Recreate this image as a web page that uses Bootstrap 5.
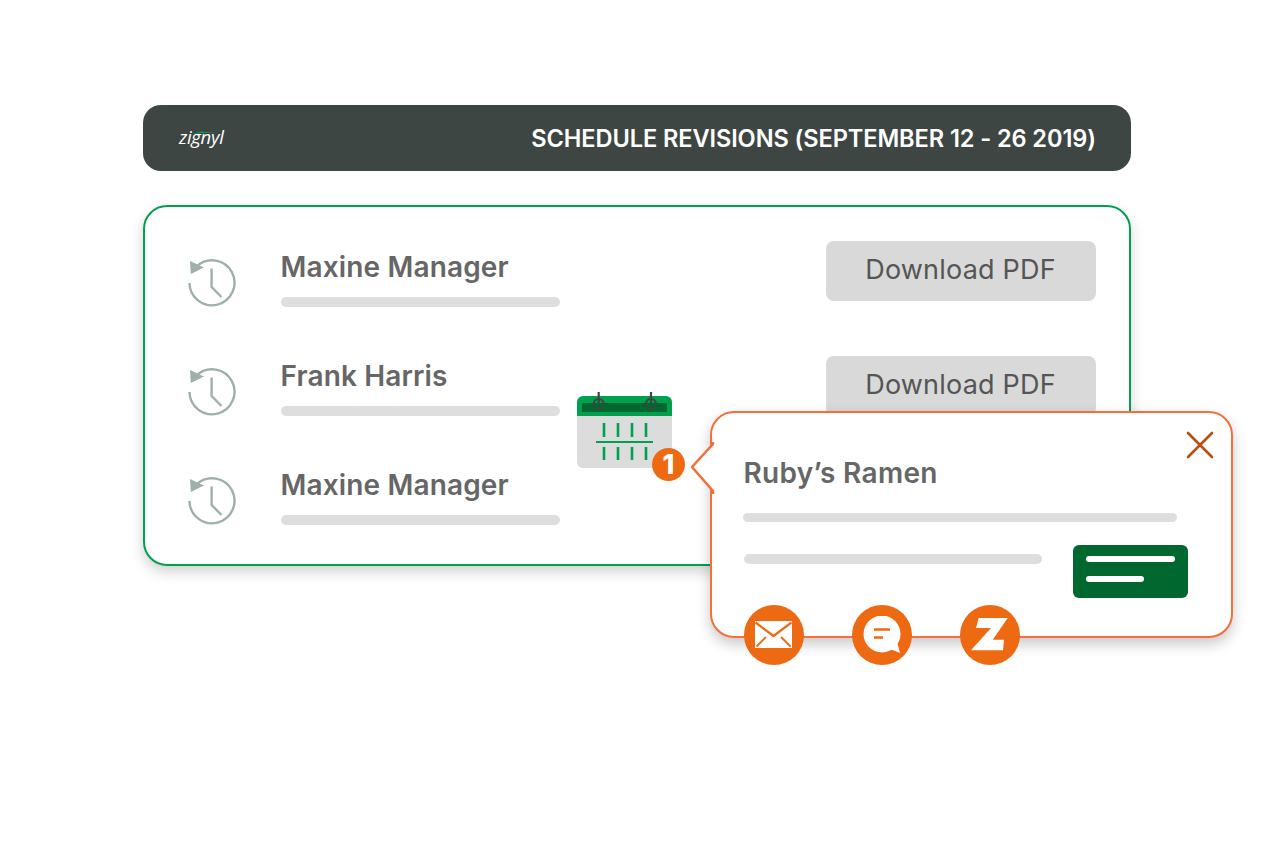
<!DOCTYPE html>
<html lang="en">
<head>
<meta charset="UTF-8">
<meta name="viewport" content="width=device-width, initial-scale=1.0">
<title>Schedule Revisions</title>
<link href="https://cdn.jsdelivr.net/npm/bootstrap@5.3.0/dist/css/bootstrap.min.css" rel="stylesheet">
<style>
body { background: #fff; font-family: Inter, "Liberation Sans", sans-serif; }
.stage { position: relative; width: 1268px; height: 849px; padding: 105px 137px 0 143px; }
.title-bar { height: 66px; background: #3e4643; border-radius: 18px; padding: 0 35px 0 36px; color: #fff; }
.logo-wrap { position: relative; width: 46px; }
.logo-text { font-family: "Open Sans", sans-serif; font-style: italic; font-size: 18.5px; letter-spacing: -.3px; line-height: 1; }
.logo-swoosh { position: absolute; left: 13px; top: 5px; }
.title-text { font-size: 23.6px; font-weight: 600; letter-spacing: -.1px; padding-top: 1px; }
.panel { height: 361px; margin-top: 34px; border: 2.5px solid #00a14e; border-radius: 24px; box-shadow: 0 6px 14px rgba(0,0,0,.18); padding: 33.5px 33.5px 0 42px; background: #fff; }
.rev-row { height: 109.3px; }
.rev-icon { width: 50px; height: 50px; margin-top: 16px; margin-right: 43.5px; }
.rev-name { font-size: 28px; font-weight: 600; color: #666; line-height: 32px; letter-spacing: .15px; margin-top: 10px; white-space: nowrap; }
.line-bar { background: #dedede; border-radius: 6px; height: 10px; }
.rev-bar { width: 279px; margin-top: 14px; }
.pdf-btn { width: 270px; height: 60px; background: #d9d9d9; border: 0; border-radius: 8px; color: #555; font-size: 27px; letter-spacing: .2px; padding: 0 0 1px; margin-bottom: 55px; }
.cal-icon { position: absolute; left: 577px; top: 390px; }
.step-dot { position: absolute; left: 652px; top: 448px; width: 33px; height: 33px; border-radius: 50%; background: #ed6a12; color: #fff; font-size: 27px; font-weight: 800; line-height: 1; }
.popup { position: absolute; left: 710px; top: 411px; width: 523px; height: 227px; background: #fff; border: 2.5px solid #f56f3a; border-radius: 24px; box-shadow: 0 6px 14px rgba(0,0,0,.22); padding: 44px 43px 0 31.5px; }
.popup-arrow { position: absolute; left: -21.5px; top: 28px; }
.popup-close { position: absolute; right: 17px; top: 18px; }
.popup-name { font-size: 28px; font-weight: 600; color: #666; line-height: 32px; letter-spacing: .3px; }
.popup-bar1 { width: 434px; height: 9px; margin-top: 24px; margin-left: -1px; }
.popup-bar2 { width: 298px; margin-top: 32px; }
.green-box { width: 115px; height: 53px; background: #00672f; border-radius: 6px; padding: 11px 13px; margin-top: 23px; gap: 14px; }
.green-line { height: 6px; border-radius: 3px; background: #fff; }
.green-line-short { width: 58px; }
.popup-actions { position: absolute; left: 31.5px; top: 191.5px; gap: 48px; }
.act-dot { width: 60px; height: 60px; border-radius: 50%; background: #ed6a12; }
</style>
</head>
<body>
<div class="stage">
  <div class="title-bar d-flex align-items-center justify-content-between">
    <div class="logo-wrap">
      <svg class="logo-swoosh" width="24" height="5" viewBox="0 0 24 5"><path d="M0 3.5 L8 .6 L24 1.6 L9 2 Z" fill="#00a14e"/></svg>
      <span class="logo-text">zignyl</span>
    </div>
    <div class="title-text">SCHEDULE REVISIONS (SEPTEMBER 12 - 26 2019)</div>
  </div>

  <div class="panel d-flex justify-content-between">
    <div>
      <div class="rev-row d-flex">
        <svg class="rev-icon" viewBox="0 0 50 50" fill="none" stroke="#9fb0aa" stroke-width="2.4"><path d="M2.5 26 A22.5 22.5 0 1 0 10 9"/><path d="M3 4 L17 10.5 L3.8 17 Z" fill="#9fb0aa" stroke="none"/><path d="M24.6 11.5 V30 L34.5 40"/></svg>
        <div>
          <div class="rev-name">Maxine Manager</div>
          <div class="line-bar rev-bar"></div>
        </div>
      </div>
      <div class="rev-row d-flex">
        <svg class="rev-icon" viewBox="0 0 50 50" fill="none" stroke="#9fb0aa" stroke-width="2.4"><path d="M2.5 26 A22.5 22.5 0 1 0 10 9"/><path d="M3 4 L17 10.5 L3.8 17 Z" fill="#9fb0aa" stroke="none"/><path d="M24.6 11.5 V30 L34.5 40"/></svg>
        <div>
          <div class="rev-name">Frank Harris</div>
          <div class="line-bar rev-bar"></div>
        </div>
      </div>
      <div class="rev-row d-flex">
        <svg class="rev-icon" viewBox="0 0 50 50" fill="none" stroke="#9fb0aa" stroke-width="2.4"><path d="M2.5 26 A22.5 22.5 0 1 0 10 9"/><path d="M3 4 L17 10.5 L3.8 17 Z" fill="#9fb0aa" stroke="none"/><path d="M24.6 11.5 V30 L34.5 40"/></svg>
        <div>
          <div class="rev-name">Maxine Manager</div>
          <div class="line-bar rev-bar"></div>
        </div>
      </div>
    </div>
    <div>
      <button class="pdf-btn d-block" type="button">Download PDF</button>
      <button class="pdf-btn d-block" type="button">Download PDF</button>
    </div>
  </div>

  <svg class="cal-icon" width="96" height="80" viewBox="0 0 96 80">
    <path d="M0 26 H95 V72 a6 6 0 0 1 -6 6 H6 a6 6 0 0 1 -6 -6 Z" fill="#dcdcdc"/>
    <path d="M0 26 V12 a6 6 0 0 1 6 -6 H89 a6 6 0 0 1 6 6 V26 Z" fill="#00a14e"/>
    <rect x="5" y="13" width="85" height="9" fill="#00672f"/>
    <g fill="none" stroke="#3e4643" stroke-width="2.2"><circle cx="21.7" cy="14" r="5"/><circle cx="74" cy="14" r="5"/><path d="M21.7 2 V14 M74 2 V14"/></g>
    <g stroke="#00a14e" stroke-width="2.6"><path d="M27 33 V47 M41 33 V47 M55 33 V47 M69 33 V47 M27 57 V70 M41 57 V70 M55 57 V70 M69 57 V70"/></g>
    <path d="M19 52 H76" stroke="#00a14e" stroke-width="2"/>
  </svg>
  <div class="step-dot d-flex align-items-center justify-content-center">1</div>

  <div class="popup">
    <svg class="popup-arrow" width="24" height="54" viewBox="0 0 24 54"><path d="M22 1 V3 L1 26 L22 50 V53" fill="#fff" stroke="#f56f3a" stroke-width="2.5"/></svg>
    <svg class="popup-close" width="28" height="28" viewBox="0 0 28 28" stroke="#b84f12" stroke-width="2.6" stroke-linecap="round"><path d="M2 2 L26 26 M26 2 L2 26"/></svg>
    <div class="popup-name">Ruby’s Ramen</div>
    <div class="line-bar popup-bar1"></div>
    <div class="d-flex justify-content-between align-items-start">
      <div class="line-bar popup-bar2"></div>
      <div class="green-box d-flex flex-column">
        <div class="green-line"></div>
        <div class="green-line green-line-short"></div>
      </div>
    </div>
    <div class="popup-actions d-flex">
      <div class="act-dot d-flex align-items-center justify-content-center">
        <svg width="37" height="27" viewBox="0 0 37 27"><rect width="37" height="27" fill="#fff"/><path d="M.5 1.5 L18.5 15 L36.5 1.5" fill="none" stroke="#ed6a12" stroke-width="2.2"/><path d="M1.5 25.5 L11 16 M35.5 25.5 L26 16" stroke="#ed6a12" stroke-width="1.8"/></svg>
      </div>
      <div class="act-dot d-flex align-items-center justify-content-center">
        <svg width="38" height="37" viewBox="0 0 38 37"><circle cx="19" cy="18" r="18.5" fill="#fff"/><path d="M27 33 L37 37 L34 26 Z" fill="#fff"/><path d="M11 13.5 H27 M11 21.5 H20" stroke="#ed6a12" stroke-width="2.4"/></svg>
      </div>
      <div class="act-dot d-flex align-items-center justify-content-center">
        <svg width="37" height="33" viewBox="0 0 37 33"><path d="M7.7 0 H36.7 L21.7 21.7 H33 L32 32.3 H0 L20 10 H5 Z" fill="#fff"/></svg>
      </div>
    </div>
  </div>
</div>
<script src="https://cdn.jsdelivr.net/npm/bootstrap@5.3.0/dist/js/bootstrap.bundle.min.js"></script>
</body>
</html>
